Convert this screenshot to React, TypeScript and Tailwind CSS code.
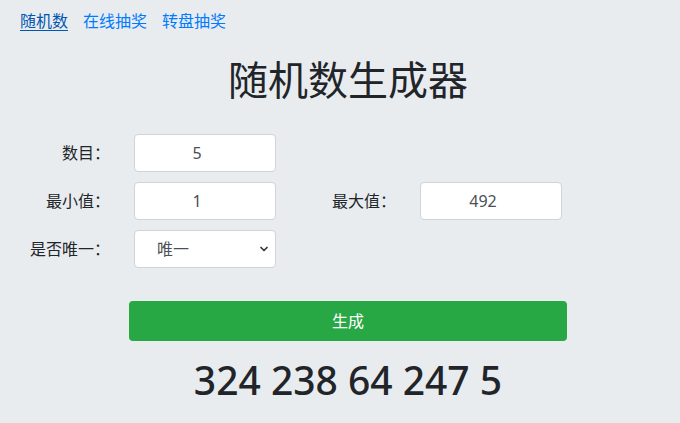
import { ChevronDown } from "lucide-react";

const font = `font-["Noto_Sans","Noto_Sans_CJK_SC",sans-serif]`;

function Field({ value }: { value: string }) {
  return (
    <input
      readOnly
      value={value}
      className="w-[142px] h-[38px] rounded-[4px] border border-[#ced4da] bg-white pl-[12px] pr-[28px] text-center text-[16px] text-[#495057] outline-none"
    />
  );
}

export default function App() {
  const results = [324, 238, 64, 247, 5];

  return (
    <div className={`w-[680px] h-[423px] bg-[#e9ecef] text-[#212529] ${font}`}>
      <nav className="flex gap-[15px] pl-[20px] pt-[9px] text-[16px] leading-[24px]">
        <a href="#" className="text-[#0056b3] underline underline-offset-[3px]">
          随机数
        </a>
        <a href="#" className="text-[#007bff]">在线抽奖</a>
        <a href="#" className="text-[#007bff]">转盘抽奖</a>
      </nav>

      <div className="pl-[16px]">
        <h1 className="mt-[23px] text-center text-[40px] leading-[48px] font-normal">
          随机数生成器
        </h1>

        <div className="mt-[30px] flex flex-col gap-[10px] text-[16px]">
          <div className="flex items-center">
            <label className="w-[94px] text-right">数目：</label>
            <div className="ml-[24px]">
              <Field value="5" />
            </div>
          </div>
          <div className="flex items-center">
            <label className="w-[94px] text-right">最小值：</label>
            <div className="ml-[24px]">
              <Field value="1" />
            </div>
            <label className="w-[120px] text-right">最大值：</label>
            <div className="ml-[24px]">
              <Field value="492" />
            </div>
          </div>
          <div className="flex items-center">
            <label className="w-[94px] text-right">是否唯一：</label>
            <div className="relative ml-[24px]">
              <select
                defaultValue="yes"
                className="w-[142px] h-[38px] appearance-none rounded-[4px] border border-[#ced4da] bg-white pl-[22px] text-[16px] text-[#495057] outline-none"
              >
                <option value="yes">唯一</option>
                <option value="no">不唯一</option>
              </select>
              <ChevronDown
                size={12}
                strokeWidth={3.5}
                className="pointer-events-none absolute right-[6px] top-[13px] text-[#343a40]"
              />
            </div>
          </div>
        </div>

        <div className="mx-auto mt-[33px] w-[438px]">
          <button className="h-[40px] w-full rounded-[4px] bg-[#28a745] text-[16px] text-white">
            生成
          </button>
        </div>

        <div className="mt-[16px] text-center text-[39px] leading-[46px] font-medium">
          {results.join(" ")}
        </div>
      </div>
    </div>
  );
}
